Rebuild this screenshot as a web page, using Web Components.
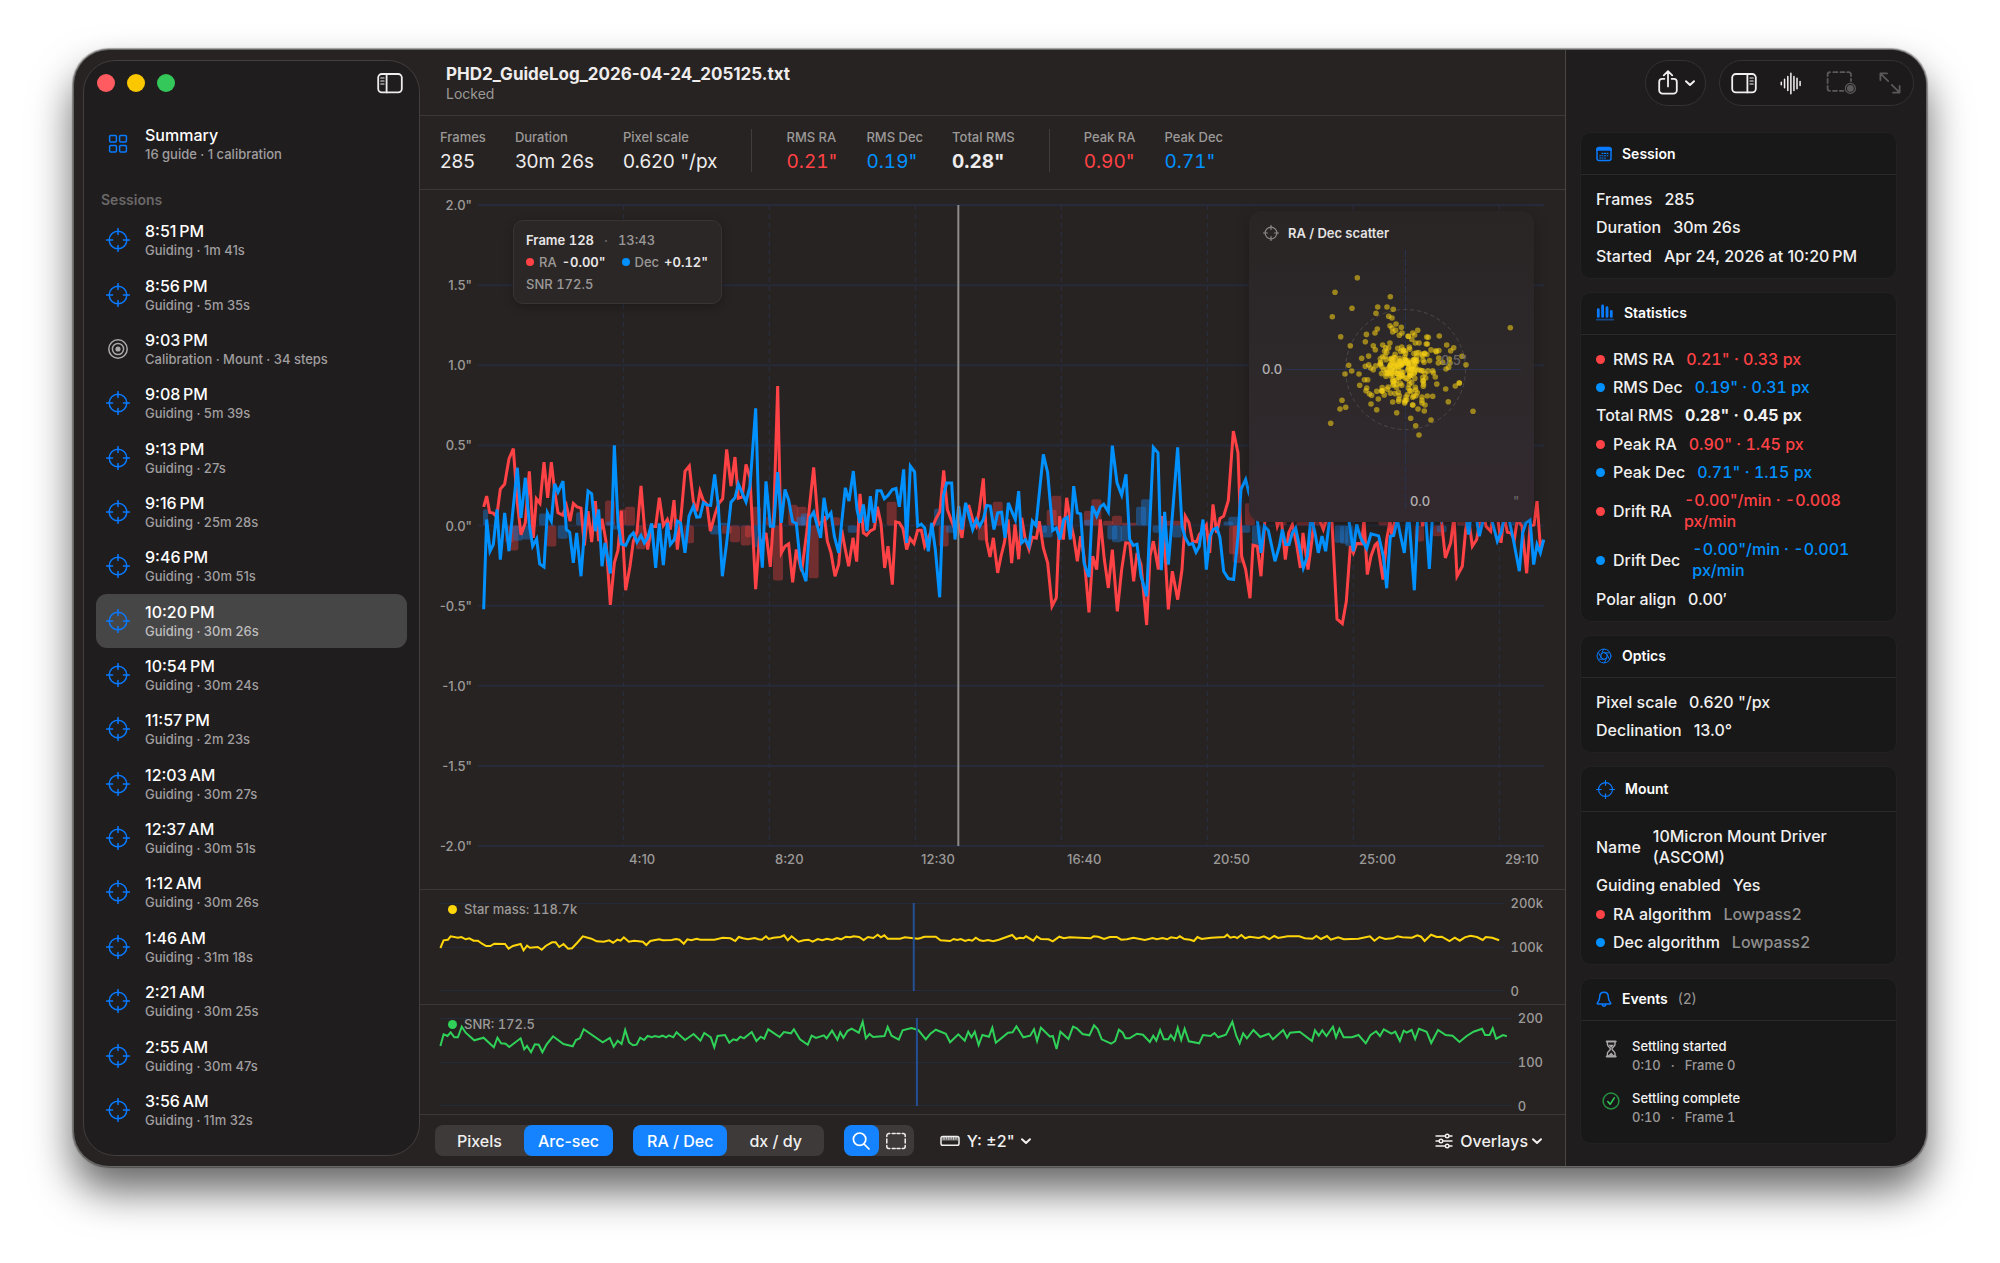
<!DOCTYPE html>
<html lang="en">
<head>
<meta charset="utf-8">
<title>PHD2_GuideLog_2026-04-24_205125.txt</title>
<style>
  html, body {
    margin: 0;
    background: #fff;
  }
  body {
    --ra: #ff4245;
    --dec: #0091ff;
    --accent: #0a7aff;
    --muted: #9b9998;
    --line: #3b3837;
    --grid: #262a3a;
    box-sizing: border-box;
    min-height: 100vh;
    padding: 49px 73px 96px;
    display: flex;
    font-family: Inter, "Liberation Sans", sans-serif;
    font-size: 16px;
    line-height: 20px;
    color: #eeecec;
    -webkit-font-smoothing: antialiased;
  }
</style>
</head>
<body>
<app-window></app-window>

<script>
const ICONS = {
  scope: [24, `<circle cx="12" cy="12" r="8.8"/><path d="M12 .6v6M12 17.4v6M.6 12h6M17.4 12h6"/>`],
  target: [24, `<circle cx="12" cy="12" r="9.2"/><circle cx="12" cy="12" r="5.6"/><circle cx="12" cy="12" r="2.6" fill="currentColor" stroke="none"/>`],
  grid: [24, `<rect x="3.6" y="3.6" width="6.8" height="6.4" rx="1"/><rect x="13.6" y="3.6" width="6.8" height="6.4" rx="1"/><rect x="3.6" y="13.6" width="6.8" height="6.4" rx="1"/><rect x="13.6" y="13.6" width="6.8" height="6.4" rx="1"/>`],
  sidebar: [26, `<rect x="1.2" y="4" width="23.6" height="18.4" rx="3.6"/><path d="M9.6 4v18.4"/><path d="M3.8 8h3.2M3.8 11h3.2M3.8 14h3.2" stroke-width="1.2"/>`],
  inspector: [26, `<rect x="1.2" y="4" width="23.6" height="18.4" rx="3.6"/><path d="M16.4 4v18.4"/><path d="M19 8h3.2M19 11h3.2M19 14h3.2" stroke-width="1.2"/>`],
  share: [26, `<path d="M9.4 8.8H7.2a3 3 0 0 0-3 3v8.4a3.4 3.4 0 0 0 3.4 3.4h10.8a3.4 3.4 0 0 0 3.4-3.4v-8.4a3 3 0 0 0-3-3h-2.2M13 16.4V1.6M8.8 5.4 13 1.2l4.2 4.2"/>`],
  chevron: [12, `<path d="M2 4.2 6 8l4-3.8" stroke-width="2"/>`],
  wave: [24, `<path d="M2.4 10.6v2.8M5.8 7.6v8.8M9.2 4.6v14.8M12.4 1.4v21.2M15.6 4.6v14.8M18.8 6.6v10.8M22 10v4"/>`],
  record: [32, `<path d="M3.6 9V7.6A2.4 2.4 0 0 1 6 5.2M9.4 5.2h4M16.4 5.2h4M23.2 5.2h1.4A2.4 2.4 0 0 1 27 7.6V9M27 12v2M3.6 12v4M3.6 19v2.4A2.4 2.4 0 0 0 6 23.8M9 23.8h4M15.8 23.8h3.6"/><circle cx="26.4" cy="21.4" r="5" stroke-width="1.2"/><circle cx="26.4" cy="21.4" r="3.4" fill="currentColor" stroke="none"/>`],
  expand: [24, `<path d="M2.4 9V2.4H9M2.8 2.8l7.4 7.4M21.6 15v6.6H15M21.2 21.2l-7.4-7.4"/>`],
  calendar: [16, `<rect x="1" y="1.5" width="14" height="13" rx="2"/><path d="M1.6 3.2h12.8" stroke-width="3"/><path d="M6 7.4h1M8.5 7.4h1M11 7.4h1M3.7 9.8h1M6 9.8h1M8.5 9.8h1M11 9.8h1M3.7 12h1M6 12h1M8.5 12h1" stroke-width="1.1"/>`],
  bars: [18, `<path d="M2.3 5.6v6.8M6.6 1.9v10.5M11 3.7v8.7M15.3 7.3v5.1" stroke-width="2.8"/><path d="M.5 15.6h17" stroke-width="1.6" opacity=".5"/>`],
  aperture: [18, `<circle cx="9" cy="9" r="7.8"/><path d="m9 5.2 3.3 1.9v3.8L9 12.8l-3.3-1.9V7.1zM9 5.2l6 .4M12.3 7.1l2.9 5.6M12.3 10.9l-3 5.6M9 12.8l-6-.4M5.7 10.9 2.8 5.3M5.7 7.1l3-5.6"/>`],
  bell: [16, `<path d="M8 1.2c-2.7 0-4.3 2-4.3 4.6 0 3.6-1.4 5-2.3 6.1-.4.5-.1 1 .5 1h12.200c.6 0 .9-.5.5-1-.9-1.100-2.300-2.500-2.300-6.100 0-2.600-1.600-4.600-4.300-4.600zM6 13.200c.2 1.300 1 2 2 2s1.800-.7 2-2"/>`],
  hourglass: [18, `<path d="M4.8 1.5h8.8M4.8 16.5h8.8" stroke-width="2.2"/><path d="M5.4 2v2.5c0 2 3 2.900 3 4.500s-3 2.500-3 4.500V16H13v-2.500c0-2-3-2.900-3-4.500s3-2.500 3-4.500V2" stroke-width="1.4"/><path d="M6.4 4.8H12L9.200 8zM6.400 15.500l2.800-3 2.800 3z" fill="currentColor" stroke="none"/>`],
  check: [18, `<circle cx="9" cy="9" r="7.9" opacity=".65"/><path d="m5.8 9.6 2.3 2.7 4.2-6.4"/>`],
  search: [22, `<circle cx="9.6" cy="9.2" r="6.2"/><path d="m14 14 5 5"/>`],
  marquee: [22, `<path d="M1.8 6.4V5.6a2 2 0 0 1 2-2h1M7.2 3.6h3M12 3.6h3M17.2 3.6h1a2 2 0 0 1 2 2v.8M20.2 9v4M20.2 15.6v.8a2 2 0 0 1-2 2h-1M15 18.4h-3M10.2 18.4h-3M4.8 18.4h-1a2 2 0 0 1-2-2v-.8M1.8 13V9"/>`],
  ruler: [20, `<rect x="1" y="5.6" width="18" height="8.6" rx="1.8"/><path d="M2 7.8h16" stroke-width="3.6" stroke-linecap="butt" opacity=".4"/><path d="M4 6v2.6M6.4 6v2M8.8 6v2.6M11.2 6v2M13.6 6v2.6M16 6v2" stroke-width="1" opacity=".7"/>`],
  sliders: [18, `<path d="M1 4h9M14.4 4H17M1 9h2.8M8.2 9H17M1 14h9M14.4 14H17"/><circle cx="12.2" cy="4" r="1.8"/><circle cx="6" cy="9" r="1.8"/><circle cx="12.2" cy="14" r="1.8"/>`]
};

class Base extends HTMLElement {
  constructor() {
    super();
    this.attachShadow({ mode: "open" });
  }
  connectedCallback() {
    this.shadowRoot.innerHTML = this.render();
  }
  attr(name) {
    return this.getAttribute(name) || "";
  }
}

class UiIcon extends Base {
  render() {
    const [box, shapes] = ICONS[this.attr("name")];
    const size = this.attr("size") || box;
    return `
      <style>
        :host { display: inline-flex; flex: none; }
        svg {
          display: block;
          fill: none;
          stroke: currentColor;
          stroke-width: ${this.attr("weight") || 1.5};
          stroke-linecap: round;
          stroke-linejoin: round;
        }
      </style>
      <svg width="${size}" height="${size}" viewBox="0 0 ${box} ${box}" aria-hidden="true">${shapes}</svg>`;
  }
}
customElements.define("ui-icon", UiIcon);

class SessionRow extends Base {
  render() {
    const icon = this.attr("icon") || "scope";
    return `
      <style>
        :host { display: flex; min-height: 54px; }
        button {
          flex: 1;
          display: flex;
          align-items: center;
          gap: 15px;
          padding: 0 10px;
          border: 0;
          border-radius: 11px;
          background: none;
          font: inherit;
          color: #fff;
          text-align: left;
        }
        :host([selected]) button { background: #474647; }
        ui-icon { color: var(--accent); }
        ui-icon[name="target"] { color: #aaa8a8; }
        strong, small { display: block; }
        strong { font-weight: 500; line-height: 20px; }
        small { font-size: 13px; font-weight: 500; line-height: 18px; color: #a09e9e; }
        :host([selected]) small { color: #bebdbd; }
      </style>
      <button type="button" ${this.hasAttribute("selected") ? 'aria-current="true"' : ""}>
        <ui-icon name="${icon}" size="24"></ui-icon>
        <span><strong><slot></slot></strong><small>${this.attr("detail")}</small></span>
      </button>`;
  }
}
customElements.define("session-row", SessionRow);

const SESSIONS = [
  ["8:51 PM", "Guiding · 1m 41s"],
  ["8:56 PM", "Guiding · 5m 35s"],
  ["9:03 PM", "Calibration · Mount · 34 steps", "target"],
  ["9:08 PM", "Guiding · 5m 39s"],
  ["9:13 PM", "Guiding · 27s"],
  ["9:16 PM", "Guiding · 25m 28s"],
  ["9:46 PM", "Guiding · 30m 51s"],
  ["10:20 PM", "Guiding · 30m 26s"],
  ["10:54 PM", "Guiding · 30m 24s"],
  ["11:57 PM", "Guiding · 2m 23s"],
  ["12:03 AM", "Guiding · 30m 27s"],
  ["12:37 AM", "Guiding · 30m 51s"],
  ["1:12 AM", "Guiding · 30m 26s"],
  ["1:46 AM", "Guiding · 31m 18s"],
  ["2:21 AM", "Guiding · 30m 25s"],
  ["2:55 AM", "Guiding · 30m 47s"],
  ["3:56 AM", "Guiding · 11m 32s"]
];
const SELECTED = "10:20 PM";

class SideBar extends Base {
  render() {
    const rows = SESSIONS.map(([time, detail, icon]) => `
      <session-row detail="${detail}" icon="${icon || "scope"}" ${time === SELECTED ? "selected" : ""}>${time.replace(" ", "\u202f")}</session-row>`).join("");
    return `
      <style>
        :host {
          display: flex;
          flex-direction: column;
          box-sizing: border-box;
          width: 337px;
          flex: none;
          margin: 10px 0 10px 9px;
          padding: 0 12px 18px;
          border: 1px solid #433d3c;
          border-radius: 32px;
          background: #1f1d1e;
        }
        header {
          display: flex;
          align-items: center;
          gap: 12px;
          height: 44px;
          margin: 0 4px 12px 1px;
        }
        i { width: 18px; height: 18px; border-radius: 50%; }
        .close { background: #ff5b60; }
        .min { background: #fbc800; }
        .max { background: #34c759; }
        button {
          display: flex;
          margin-left: auto;
          padding: 0;
          border: 0;
          background: none;
          color: #eeecec;
        }
        h2 {
          margin: 19px 0 3px 5px;
          font-size: 14px;
          font-weight: 600;
          line-height: 20px;
          color: #6a6868;
        }
        nav { flex: 1; display: flex; flex-direction: column; }
        nav session-row { flex: 1; }
      </style>
      <header>
        <i class="close"></i><i class="min"></i><i class="max"></i>
        <button type="button" aria-label="Toggle sidebar"><ui-icon name="sidebar" weight="1.8"></ui-icon></button>
      </header>
      <session-row icon="grid" detail="16 guide · 1 calibration">Summary</session-row>
      <h2>Sessions</h2>
      <nav>${rows}</nav>`;
  }
}
customElements.define("side-bar", SideBar);

class StatItem extends Base {
  render() {
    return `
      <style>
        :host { display: block; }
        span, b { display: block; white-space: nowrap; }
        span { font-size: 13px; font-weight: 500; line-height: 20px; color: var(--muted); }
        b { margin-top: 2px; font-size: 19px; line-height: 25px; font-weight: 400; color: #eeecec; }
        :host([tone]) b { font-variant-numeric: tabular-nums; }
        :host([tone="ra"]) b { color: var(--ra); }
        :host([tone="dec"]) b { color: var(--dec); }
        :host([strong]) b { font-weight: 700; }
      </style>
      <span>${this.attr("label")}</span><b><slot></slot></b>`;
  }
}
customElements.define("stat-item", StatItem);

// Each run of samples is [x offset, x scale, "x,y x,y ..."].
function trace(runs, top, yScale) {
  return runs.map(([at, scale, text]) => text.trim().split(/\s+/).map(p => {
    const [x, y] = p.split(",").map(Number);
    return (at + x * scale).toFixed(1) + "," + ((y - top) * yScale).toFixed(1);
  }).join(" ")).join(" ");
}

const RA = [
  [-24, 1, "41,412 50,380 59,429 70,431 80,442 91,359 104,344 117,268 130,238 142,400 153,496 166,460 178,306 190,505 199,388 210,402 222,278 233,385 244,278 254,365 264,430 278,437 289,408 300,455 310,402 321,412 333,416 343,528 354,425 365,518 376,395 386,515 396,448 408,515 421,706 433,580 444,542 454,424 467,662 480,590 490,515 501,487 513,349 523,470 533,540 545,471 557,471 568,385 580,468 592,450 601,480 612,392 622,540 634,430 645,306 658,290 670,395 680,425 690,365 700,393 711,405 721,485 735,435 746,402 758,388 770,240 783,350 795,263 805,386 817,382 828,285 840,325 857,659 868,508 877,520 888,490 901,592 912,420 923,50 934,550 945,530 956,523 968,638 979,540 995,605 1010,490 1031,294 1045,467 1057,455 1063,440 1072,515 1083,550 1095,620 1106,585 1115,480 1124,530 1136,590 1149,505 1160,576"],
  [1146, 1, "0,373 10,490 20,497 31,484 43,478 52,412 63,462 74,595 84,530 97,645 107,457 118,460 129,478 140,540 150,507 162,522 173,482 184,482 194,530 205,505 215,480 226,452 240,425 251,303 262,420 273,450 284,478 295,462 306,505 316,412 327,410 338,450 349,470 358,420 370,327 380,515 390,562 400,505 413,610 423,560 433,520 444,450 455,581 465,465 476,569 485,445 495,505 507,540 517,503 529,506 538,455 550,535 563,580 576,710 589,685 599,440 610,510 620,385 630,450 641,500 652,575 662,500 672,560 687,728 698,560 710,600 721,450 733,570 745,655 757,540 772,725 785,600 797,520 809,521 821,635 831,550 843,585 860,766 870,560 880,515 895,600 905,440 914,530 925,719 937,605 953,690 966,600 976,440 987,460 998,515 1010,517 1018,495 1028,485 1039,467 1049,550 1059,405 1070,490 1080,447 1091,440 1105,393 1120,185 1134,250 1145,560 1157,600 1170,686 1179,527"],
  [2166, 1, "172,530 183,620 195,450 208,420 220,400 232,470 243,440 256,570 266,490 277,465 289,520 301,595 309,490 324,600 336,510 347,400 358,450 370,480 382,440 395,440 411,748 427,762 439,695 451,530 460,550 470,522 485,523 492,450 502,615 513,560 525,527 532,520 549,630 560,510 570,455 575,495 590,430 600,400 612,440 625,400 640,420 655,380 668,470 680,400 695,380 710,420 722,430 736,565 752,520 762,440 771,620 787,590 797,480 805,440 817,530 830,510 840,450 850,430 858,470 872,485 885,400 895,460 903,520 912,440 922,488 932,490 943,510 952,450 966,470 980,611 990,470 1002,466 1011,395 1021,530 1031,512"]
];
const DEC = [
  [-24, 1, "41,719 50,450 60,545 70,525 81,420 91,570 104,430 117,545 128,430 142,295 153,445 166,325 178,465 188,530 200,508 209,583 222,592 232,430 244,455 254,343 264,368 279,335 289,480 299,488 310,580 320,490 333,620 343,490 354,365 365,373 376,485 386,420 396,590 405,520 421,612 433,228 444,460 454,524 467,528 480,500 490,490 501,518 513,498 523,520 533,505 545,462 557,595 568,462 580,587 592,460 601,525 613,510 622,455 632,461 645,550 657,440 670,410 680,443 690,442 700,400 711,407 722,408 734,315 745,410 757,620 770,520 783,398 795,385 805,343 817,372 828,397 840,350 857,117 868,480 877,594 888,336 901,470 911,470 923,308 934,460 945,360 956,392 968,457 979,462 992,590 1008,635 1020,445 1031,428 1042,470 1052,505 1062,385 1072,445 1083,430 1093,500 1106,550 1115,460 1126,355 1137,395 1150,305 1161,420"],
  [1146, 1, "0,460 10,405 21,485 31,380 42,460 51,364 63,364 73,388 84,378 97,360 108,357 118,412 131,300 140,520 151,290 164,308 173,470 184,464 194,475 205,545 215,460 226,540 239,683 250,380 260,341 275,341 285,510 296,410 306,480 317,400 327,440 338,480 349,450 359,470 370,450 380,408 391,410 402,480 413,430 425,428 435,505 445,400 455,425 466,450 476,365 485,520 496,510 507,530 517,455 528,468 538,370 550,255 563,310 578,483 589,475 600,510 611,450 622,443 631,510 641,350 652,430 662,433 672,580 687,622 697,410 710,440 721,412 731,404 745,427 757,229 771,340 785,377 798,315 809,510 820,528 831,524 843,620 860,680 870,450 880,234 894,250 904,602 914,427 925,585 937,440 953,234 966,470 976,505 987,525 998,522 1008,548 1018,530 1029,450 1039,600 1050,500 1060,480 1071,475 1080,505 1091,605 1105,627 1121,630 1134,500 1143,360 1157,330"],
  [2166, 1, "147,372 160,400 172,450 183,550 193,470 205,483 225,575 238,530 247,480 257,525 267,525 277,490 287,475 298,530 310,595 322,560 333,440 345,490 355,550 366,500 377,545 390,440 400,420 415,440 430,400 445,440 460,545 470,465 482,505 500,537 513,493 536,499 550,560 560,656 571,500 581,498 592,450 602,500 613,550 625,420 643,662 655,400 668,450 677,440 688,598 698,430 710,400 725,450 740,400 755,430 770,400 785,440 795,420 806,495 817,400 828,440 838,500 850,450 862,430 875,450 892,515 903,490 914,440 925,440 940,510 958,605 968,490 978,460 990,450 1001,585 1011,525 1021,550 1031,510"]
];

// Guide pulses: x, width, height (negative is below the axis).
const RA_PULSES = [
  [81,26,-50],[93,28,-75],[205,30,-63],[381,30,75],[423,20,49],[441,30,56],[474,28,-71],[618,30,-53],[731,30,-25],[756,30,-50],[788,30,-60],[801,20,-35],[821,28,56],[864,16,27],[885,30,-165],[931,28,62],[956,30,56],[992,30,-158],[1058,28,25],
  [1226,30,71],[1382,30,-63],[1500,24,-45],[1544,30,71],[1706,30,47],[1720,30,89],[1818,22,44],[1840,30,79],[1875,30,14],[1902,30,29],[1931,46,8],[2051,58,14],[2253,30,-86],[2264,30,-112],[2301,30,67],
  [2396,30,27],[2456,50,27],[2510,40,27],[2701,30,17],[2810,28,-48],[2864,28,-32],[2936,30,27]
];
const DEC_PULSES = [
  [15,15,49],[106,28,-46],[131,30,-42],[183,24,36],[239,30,-40],[294,20,40],[384,26,12],[401,28,-12],[696,28,-27],[721,28,8],[821,28,-65],[956,26,26],[968,28,36],[1109,28,-22],
  [1368,20,50],[1404,26,-22],[1681,26,-22],[1694,30,-36],[1818,24,17],[1888,30,-42],[1902,30,-50],[1928,22,-47],[1974,30,56],[1989,28,79],[2024,30,-22],[2083,28,-36],[2236,30,12],[2251,30,26],[2289,28,-22],[2322,28,-57],
  [2570,28,-52],[2586,24,-55],[2602,24,-62],[2876,30,-20],[3100,40,20]
];

const pulses = (list, cls) => list.map(([x, w, h]) =>
  `<rect class="${cls}" x="${x}" y="${h > 0 ? 960 - h : 960}" width="${w}" height="${Math.abs(h)}" rx="6"/>`).join("");

class FrameTip extends Base {
  render() {
    return `
      <style>
        :host {
          display: block;
          padding: 12px 13px 4px 12px;
          border: 1px solid #373433;
          border-radius: 10px;
          background: #2b2727;
          box-shadow: 0 3px 10px rgba(0, 0, 0, .25);
          font-size: 13px;
          font-weight: 500;
          font-variant-numeric: tabular-nums;
          line-height: 22px;
          color: var(--muted);
          white-space: nowrap;
        }
        p { margin: 0; margin-top: -4px; padding-bottom: 4px; display: flex; align-items: center; }
        b { font-weight: 600; color: #e8e6e6; }
        i { width: 8px; height: 8px; margin-right: 5px; border-radius: 50%; background: var(--ra); }
        .dec { background: var(--dec); }
        b.val { margin: 0 16px 0 5px; }
        b.last { margin-right: 0; }
        .sep { margin: 0 10px; color: #6f6d6c; }
      </style>
      <p><b>Frame 128</b><span class="sep">·</span><span>13:43</span></p>
      <p><i></i>RA <b class="val">-0.00"</b><i class="dec"></i>Dec <b class="val last">+0.12"</b></p>
      <p>SNR 172.5</p>`;
  }
}
customElements.define("frame-tip", FrameTip);

const OUTER = [
  [412,264],[345,308],[337,381],[396,356],[511,321],[473,352],[501,352],[520,359],[468,371],[506,380],[516,385],[871,414],[362,441],[391,468],[436,456],[759,665],[332,701],[360,658],[377,653],[366,632],[597,736],[587,708],[633,691],[572,686],[530,669],[470,660],[453,643],[475,628],[685,636],[706,589],[718,580],[718,580],[677,598],[738,525],[726,500],[701,474],[680,466],[692,483],[658,439],[625,443],[620,442],[593,422],[619,463],[622,463],[649,486],[386,527],[395,544],[375,553],[425,506],[419,587],[443,570],[440,595],[438,603],[448,612],[470,605],[638,620],[606,622],[606,632],[606,640],[615,646],[594,658],[613,664],[578,646],[578,646],[578,623],[518,637],[536,635],[555,636],[558,622],[560,630],[555,632],[472,418],[465,430],[528,403],[544,413],[510,408],[516,415],[518,427],[527,422],[546,430],[538,437],[646,562],[640,549],[638,543],[678,538],[686,533],[690,520],[688,508],[655,520],[668,518],[460,468],[466,480],[488,466],[497,474],[565,440],[565,440],[584,436],[586,460],[578,430],[597,460],[617,565],[610,590],[436,530],[446,525],[452,535],[460,540]
];

class ScatterPanel extends Base {
  points() {
    const pts = OUTER.slice();
    let seed = 11;
    const rand = () => (seed = (seed * 16807) % 2147483647) / 2147483647;
    const bell = () => (rand() + rand() + rand() - 1.5) * 2;
    for (let i = 0; i < 185; i++) {
      pts.push([547 + bell() * 45, 540 + bell() * 40]);
    }
    return pts.map(([x, y]) =>
      `<circle cx="${((x - 87) / 3).toFixed(1)}" cy="${((y - 64) / 3).toFixed(1)}" r="2.8"/>`).join("");
  }
  render() {
    return `
      <style>
        :host {
          display: block;
          width: 285px;
          border-radius: 13px;
          background: linear-gradient(#292525, #2d282a 50%, #32292f);
          box-shadow: 0 4px 14px rgba(0, 0, 0, .25);
        }
        svg { display: block; width: 100%; }
        h3 {
          position: absolute;
          top: 12px;
          left: 14px;
          margin: 0;
          display: flex;
          align-items: center;
          gap: 9px;
          font-size: 13px;
          line-height: 20px;
          font-weight: 600;
          color: #e4e2e2;
        }
        ui-icon { color: #8b8888; }
        .axis { stroke: #28334f; stroke-width: 1; }
        .ring { fill: none; stroke: #4c4748; stroke-width: 1; stroke-dasharray: 4 3; }
        .dots { fill: #f5cf13; fill-opacity: .56; }
        text { font-size: 13px; font-weight: 500; fill: #b3b0b1; }
        .faint { fill: #7b7677; fill-opacity: .8; }
      </style>
      <svg viewBox="0 0 285 311" role="img" aria-label="RA / Dec scatter">
        <path class="axis" d="M36 158.5h236"/>
        <path class="axis" d="M156.5 39v259" stroke-dasharray="7 2"/>
        <circle class="ring" cx="156.5" cy="158.5" r="60"/>
        <g class="dots">${this.points()}</g>
        <text x="13" y="163">0.0</text>
        <text x="161" y="295">0.0</text>
        <text class="faint" x="192" y="154">0.5"</text>
        <text class="faint" x="264" y="295">"</text>
      </svg>
      <h3><ui-icon name="scope" size="16" weight="1.8"></ui-icon>RA / Dec scatter</h3>`;
  }
}
customElements.define("scatter-panel", ScatterPanel);

class GuideChart extends Base {
  render() {
    const rows = [0, 240, 480, 720, 960, 1200, 1440, 1680, 1920];
    const cols = [436, 874, 1312, 1750, 2188, 2626, 3064];
    return `
      <style>
        :host {
          display: grid;
          grid-template: 1fr auto / 58px 1fr 21px;
          padding-top: 15px;
          min-height: 400px;
          font-size: 13px;
          font-weight: 500;
          line-height: 16px;
          color: #9c9a99;
        }
        .y {
          display: flex;
          flex-direction: column;
          justify-content: space-between;
          margin: -8px 6px -8px 0;
          text-align: right;
        }
        .plot { position: relative; min-height: 0; }
        svg.lines { position: absolute; inset: 0; width: 100%; height: 100%; overflow: visible; }
        .lines * { vector-effect: non-scaling-stroke; }
        .h { stroke: var(--grid); stroke-width: 2; }
        .v { stroke: #2b2f41; stroke-width: 1; stroke-dasharray: 5 4; }
        .ra, .dec { fill: none; stroke: var(--ra); stroke-width: 3; }
        .dec { stroke: var(--dec); }
        .pra { fill: var(--ra); opacity: .34; }
        .pdec { fill: #1d7fe0; opacity: .42; }
        .cursor { stroke: #8c8b8a; stroke-width: 2; }
        .x {
          grid-column: 2;
          display: grid;
          grid-template-columns: 145fr repeat(6, 146fr) 45fr;
          padding: 5px 0 22px;
        }
        .x span { padding-left: 6px; white-space: nowrap; }
        .x span:first-child { grid-column: 2; }
        frame-tip { position: absolute; left: 35px; top: 15px; }
        scatter-panel { position: absolute; right: 10px; top: 6px; }
      </style>
      <div class="y">${["2.0", "1.5", "1.0", "0.5", "0.0", "-0.5", "-1.0", "-1.5", "-2.0"].map(v => `<span>${v}"</span>`).join("")}</div>
      <div class="plot">
        <svg class="lines" viewBox="0 0 3198 1920" preserveAspectRatio="none" role="img" aria-label="RA and Dec guiding error">
          ${rows.map(y => `<path class="h" d="M0 ${y}H3198"/>`).join("")}
          ${cols.map(x => `<path class="v" d="M${x} 0V1920"/>`).join("")}
          ${pulses(RA_PULSES, "pra")}${pulses(DEC_PULSES, "pdec")}
          <polyline class="ra" points="${trace(RA, -492, 1)}"/>
          <polyline class="dec" points="${trace(DEC, -492, 1)}"/>
          <path class="cursor" d="M1441 0V1920"/>
        </svg>
        <frame-tip></frame-tip>
        <scatter-panel></scatter-panel>
      </div>
      <div class="x">${["4:10", "8:20", "12:30", "16:40", "20:50", "25:00", "29:10"].map(t => `<span>${t}</span>`).join("")}</div>`;
  }
}
customElements.define("guide-chart", GuideChart);

const MASS = [
  [-20, 1 / 2.8, "57,203 66,180 78,178 86,168 106,172 116,170 128,177 138,174 150,181 162,181 174,190 185,197 197,197 208,190 238,191 248,205 260,197 282,191 290,210 300,196 308,202 330,200 341,208 352,197 370,186 380,186 390,200 402,191 415,205 426,204 440,188 456,168 480,175 495,183 515,184 530,180 541,187 553,178 562,181 571,171 585,184 600,181 624,184 634,194 645,182 670,177 680,180 705,179 717,176 727,178 739,190 749,177 760,180 775,175 785,178 825,178 848,172 870,174 883,182 893,170 905,174 918,177 938,173 948,177 958,178 969,168 977,176 990,172 1010,170 1020,165 1030,180 1041,168 1060,184 1075,180 1088,178 1100,184 1114,176 1127,180 1140,175 1155,179 1168,173 1180,177 1193,169 1205,171 1215,168 1230,170 1243,179 1255,170 1270,173 1282,163 1291,171 1301,165 1310,175 1345,175 1358,171 1395,175 1403,173 1413,169 1445,169 1458,180 1485,182 1495,176 1505,179 1515,176 1527,182 1537,178 1547,181 1557,172"],
  [540, 1 / 2.613, "0,180 10,182 22,179 35,183 50,178 85,164 95,176 105,172 115,174 121,168 140,181 149,168 160,176 180,177 191,183 208,169 220,174 235,171 290,174 298,168 310,169 325,176 340,170 358,170 370,178 385,177 402,172 432,179 452,173 463,177 478,173 490,177 500,171 515,174 523,168 535,176 550,178 560,182 569,170 580,176 605,172 640,170 647,163 655,172 665,169 673,173 684,164 694,174 705,169 730,173 743,168 757,176 770,167 780,173 805,168 835,168 850,174 870,175 880,167 892,176 908,167 918,178 937,171 952,177 990,175 1020,168 1032,181 1045,170 1060,176 1080,174 1092,168 1105,171 1130,172 1144,165 1154,169 1163,182 1180,163 1195,170 1208,169 1228,182 1242,172 1255,181 1268,171 1283,166 1300,170 1315,179 1323,170 1340,172 1358,180"]
];
const SNR = [
  [-20, 1 / 2.8, "57,498 66,463 77,468 86,457 96,472 106,472 117,440 128,458 152,481 178,473 207,502 217,473 227,490 240,491 250,501 282,475 292,508 300,498 311,517 322,493 333,494 343,517 355,493 373,469 402,492 428,499 437,480 448,475 459,448 512,487 532,474 543,500 554,482 565,492 575,450 586,487 597,496 607,494 617,473 628,480 638,468 650,472 658,468 670,471 680,467 690,472 698,466 710,472 719,457 743,480 767,462 786,482 797,459 815,472 825,502 834,468 855,465 867,488 878,478 888,481 898,470 908,475 930,456 943,483 955,470 965,476 976,448 1008,471 1020,456 1040,460 1048,448 1065,478 1087,494 1098,467 1110,474 1132,466 1140,475 1155,452 1170,479 1178,457 1187,473 1198,453 1210,446 1230,458 1241,425 1250,475 1260,462 1270,471 1302,468 1311,441 1322,467 1342,479 1353,451 1378,444 1397,450 1418,478 1430,462 1446,449 1474,461 1486,487 1509,463 1527,482 1537,455 1546,472 1555,455 1566,495"],
  [540, 1 / 2.613, "3,480 8,465 25,470 34,443 43,488 75,458 87,457 97,439 115,472 133,467 143,448 151,483 161,443 185,470 192,468 202,507 212,455 233,477 245,440 255,445 270,462 288,466 300,436 310,448 320,478 345,491 355,483 365,449 375,458 382,475 393,475 412,461 428,464 446,486 455,467 463,482 473,450 483,478 494,478 501,465 510,480 519,443 528,480 537,446 548,484 575,490 585,465 605,468 615,459 625,472 645,464 662,425 672,467 681,490 690,460 700,475 717,450 735,471 757,461 768,478 795,450 805,473 813,458 838,455 870,483 878,451 888,467 897,451 908,468 925,440 933,472 942,446 953,472 975,472 992,465 1011,490 1023,466 1038,454 1048,468 1058,448 1078,461 1088,455 1100,483 1110,452 1118,458 1131,450 1140,477 1150,446 1170,455 1182,489 1200,450 1220,465 1238,467 1256,486 1275,468 1293,455 1315,446 1323,465 1335,465 1343,445 1352,476 1370,465 1380,469"]
];
const STRIPS = {
  mass: { width: 1065, cursor: 474, color: "#ffd60a", label: "Star mass: 118.7k", ticks: ["200k", "100k", "0"], points: trace(MASS, 68, 1 / 3) },
  snr: { width: 1073, cursor: 477.5, color: "#30d158", label: "SNR: 172.5", ticks: ["200", "100", "0"], points: trace(SNR, 414, 1 / 3) }
};

class StripChart extends Base {
  render() {
    const s = STRIPS[this.attr("kind")];
    return `
      <style>
        :host {
          display: flex;
          gap: 6px;
          padding: 13px 22px 13px 20px;
          border-top: 1px solid var(--line);
          font-size: 13px;
          font-weight: 500;
          font-variant-numeric: tabular-nums;
          line-height: 16px;
          color: #9c9a99;
        }
        :host([kind="snr"]) { padding-bottom: 8px; }
        .plot { position: relative; flex: 1; height: 88px; }
        svg { display: block; width: 100%; height: 100%; overflow: visible; }
        svg * { vector-effect: non-scaling-stroke; }
        .h { stroke: #242c3b; stroke-width: 1; }
        .cursor { stroke: #234f94; stroke-width: 2; }
        polyline { fill: none; stroke: ${s.color}; stroke-width: 2; }
        .legend { position: absolute; left: 8px; top: -2px; display: flex; align-items: center; gap: 7px; }
        .legend i { width: 9px; height: 9px; border-radius: 50%; background: ${s.color}; }
        .ticks { display: flex; flex-direction: column; justify-content: space-between; margin: -8px 0; }
      </style>
      <div class="plot">
        <span class="legend"><i></i>${s.label}</span>
        <svg viewBox="0 0 ${s.width} 88" preserveAspectRatio="none" role="img" aria-label="${s.label}">
          <path class="h" d="M0 .5H${s.width}M0 44.5H${s.width}M0 87.5H${s.width}"/>
          <polyline points="${s.points}"/>
          <path class="cursor" d="M${s.cursor} 0V88"/>
        </svg>
      </div>
      <div class="ticks">${s.ticks.map(t => `<span>${t}</span>`).join("")}</div>`;
  }
}
customElements.define("strip-chart", StripChart);

class SegmentedControl extends Base {
  render() {
    return `
      <style>
        :host {
          display: flex;
          height: 31px;
          border-radius: 8px;
          background: #3d3a39;
        }
        ::slotted(button) {
          padding: 0 14px;
          border: 0;
          border-radius: 8px;
          background: none;
          font: inherit;
          font-weight: 500;
          color: #f1efef;
        }
        ::slotted(button[aria-pressed="true"]) { background: #1583ff; color: #fff; }
        :host([wide]) ::slotted(button[aria-pressed="false"]) { padding: 0 22px; }
        :host([icons]) ::slotted(button) { display: flex; align-items: center; padding: 0 6px; width: 35px; justify-content: center; }
      </style>
      <slot></slot>`;
  }
}
customElements.define("segmented-control", SegmentedControl);

class ChartToolbar extends Base {
  render() {
    return `
      <style>
        :host {
          display: flex;
          align-items: center;
          gap: 20px;
          height: 51px;
          padding: 0 22px 0 15px;
          border-top: 1px solid var(--line);
          font-weight: 500;
        }
        label, .menu {
          display: flex;
          align-items: center;
          gap: 7px;
          color: #f1efef;
        }
        label { margin-left: 6px; }
        select {
          appearance: none;
          padding: 0;
          margin-right: -3px;
          border: 0;
          background: none;
          font: inherit;
          color: inherit;
        }
        .menu { margin-left: auto; padding: 0; border: 0; background: none; font: inherit; }
        .menu ui-icon:last-child { margin-left: -4px; }
      </style>
      <segmented-control wide>
        <button type="button" aria-pressed="false">Pixels</button>
        <button type="button" aria-pressed="true">Arc-sec</button>
      </segmented-control>
      <segmented-control wide>
        <button type="button" aria-pressed="true">RA / Dec</button>
        <button type="button" aria-pressed="false">dx / dy</button>
      </segmented-control>
      <segmented-control icons>
        <button type="button" aria-pressed="true" aria-label="Zoom"><ui-icon name="search" weight="1.7"></ui-icon></button>
        <button type="button" aria-pressed="false" aria-label="Select region"><ui-icon name="marquee"></ui-icon></button>
      </segmented-control>
      <label><ui-icon name="ruler"></ui-icon>
        <select aria-label="Y range"><option>Y: ±2"</option><option>Y: ±4"</option></select>
        <ui-icon name="chevron"></ui-icon>
      </label>
      <button class="menu" type="button" aria-haspopup="menu"><ui-icon name="sliders" weight="1.4"></ui-icon>Overlays<ui-icon name="chevron"></ui-icon></button>`;
  }
}
customElements.define("chart-toolbar", ChartToolbar);

class LogView extends Base {
  render() {
    return `
      <style>
        :host { display: flex; flex-direction: column; flex: 1; min-width: 0; }
        header { padding: 14px 26px 12px; border-bottom: 1px solid var(--line); }
        h1 { margin: 0; font-size: 17px; line-height: 21px; font-weight: 700; color: #eeecec; }
        header p { margin: 0; font-size: 14px; line-height: 18px; color: var(--muted); }
        .stats {
          display: flex;
          gap: 29px;
          padding: 11px 20px 15px;
          border-bottom: 1px solid var(--line);
        }
        hr { width: 1px; margin: 2px 5px; border: 0; background: #403d3c; }
        guide-chart { flex: 1; }
      </style>
      <header><h1>PHD2_GuideLog_2026-04-24_205125.txt</h1><p>Locked</p></header>
      <div class="stats">
        <stat-item label="Frames">285</stat-item>
        <stat-item label="Duration">30m 26s</stat-item>
        <stat-item label="Pixel scale">0.620 "/px</stat-item>
        <hr>
        <stat-item label="RMS RA" tone="ra">0.21"</stat-item>
        <stat-item label="RMS Dec" tone="dec">0.19"</stat-item>
        <stat-item label="Total RMS" tone="total" strong>0.28"</stat-item>
        <hr>
        <stat-item label="Peak RA" tone="ra">0.90"</stat-item>
        <stat-item label="Peak Dec" tone="dec">0.71"</stat-item>
      </div>
      <guide-chart></guide-chart>
      <strip-chart kind="mass"></strip-chart>
      <strip-chart kind="snr"></strip-chart>
      <chart-toolbar></chart-toolbar>`;
  }
}
customElements.define("log-view", LogView);

class InfoCard extends Base {
  render() {
    return `
      <style>
        :host {
          display: flex;
          flex-direction: column;
          border: 1px solid #232222;
          border-radius: 11px;
          background: #181818;
        }
        header {
          display: flex;
          align-items: center;
          gap: 10px;
          min-height: 41px;
          padding: 0 15px;
          border-bottom: 1px solid #2b2a2a;
        }
        :host([icon="scope"]) header { min-height: 44px; }
        ui-icon { color: var(--accent); }
        h2 { margin: 0; font-size: 14px; font-weight: 600; color: #fff; }
        header span { font-size: 14px; color: var(--muted); }
        .body {
          flex: 1;
          display: flex;
          flex-direction: column;
          justify-content: space-between;
          gap: 7px;
          padding: 14px 14px 11px 15px;
        }
        :host([count]) .body { padding: 16px 14px 9px 15px; }
      </style>
      <header>
        <ui-icon name="${this.attr("icon")}" size="${this.attr("size") || 16}" weight="${this.attr("weight")}"></ui-icon>
        <h2>${this.attr("heading")}</h2>
        ${this.attr("count") ? `<span>(${this.attr("count")})</span>` : ""}
      </header>
      <div class="body"><slot></slot></div>`;
  }
}
customElements.define("info-card", InfoCard);

class InfoRow extends Base {
  render() {
    return `
      <style>
        :host { display: flex; align-items: center; line-height: 21px; font-weight: 500; color: #f1f0f0; }
        .label { white-space: nowrap; margin-right: 12px; }
        :host([dot]) .label::before {
          content: "";
          display: inline-block;
          width: 9px;
          height: 9px;
          margin-right: 8px;
          border-radius: 50%;
          background: var(--ra);
          vertical-align: 1px;
        }
        :host([dot="dec"]) .label::before { background: var(--dec); }
        :host([tone="ra"]) .value { color: var(--ra); }
        :host([tone="dec"]) .value { color: var(--dec); }
        :host([tone="muted"]) .value { color: #8f8e8e; }
        :host([tone]) .value { font-variant-numeric: tabular-nums; }
        :host([strong]) .value { font-weight: 700; font-variant-numeric: tabular-nums; }
      </style>
      <span class="label">${this.attr("label")}</span><span class="value"><slot></slot></span>`;
  }
}
customElements.define("info-row", InfoRow);

class EventItem extends Base {
  render() {
    return `
      <style>
        :host {
          display: grid;
          grid-template-columns: 18px 1fr;
          column-gap: 12px;
          padding: 0 6px 7px;
          font-size: 13px;
          font-weight: 500;
          line-height: 19px;
          color: #f4f3f3;
        }
        ui-icon { margin-top: 3px; color: #aaa8a8; }
        ui-icon[name="check"] { color: #30d158; }
        small { display: block; font-size: 13px; font-variant-numeric: tabular-nums; color: var(--muted); }
        i { margin: 0 10px; font-style: normal; }
      </style>
      <ui-icon name="${this.attr("icon")}"></ui-icon>
      <div><slot></slot><small>${this.attr("time")}<i>·</i>Frame ${this.attr("frame")}</small></div>`;
  }
}
customElements.define("event-item", EventItem);

class InspectorPane extends Base {
  render() {
    return `
      <style>
        :host {
          display: flex;
          flex-direction: column;
          box-sizing: border-box;
          width: 361px;
          flex: none;
          padding: 10px 12px 22px 14px;
          border-left: 1px solid #4a4543;
          background: #201d1e;
        }
        .tools { display: flex; justify-content: flex-end; gap: 13px; margin-bottom: 26px; }
        .pill {
          display: flex;
          align-items: center;
          box-sizing: border-box;
          height: 46px;
          padding: 0 11px;
          border: 1px solid #363232;
          border-radius: 23px;
          background: #1c1a1a;
        }
        button { display: flex; align-items: center; padding: 0; border: 0; background: none; color: #f1efef; }
        button:disabled { color: #5b5959; }
        .share { gap: 3px; padding: 0 9px; }
        .group { gap: 22px; }
        .cards { flex: 1; display: flex; flex-direction: column; gap: 13px; margin-right: 17px; }
        .cards > :nth-child(1) { flex-grow: 3; }
        .cards > :nth-child(2) { flex-grow: 8; }
        .cards > :nth-child(3) { flex-grow: 2; }
        .cards > :nth-child(4) { flex-grow: 4; }
      </style>
      <div class="tools">
        <button class="pill share" type="button" aria-label="Share"><ui-icon name="share" weight="1.8"></ui-icon><ui-icon name="chevron"></ui-icon></button>
        <div class="pill group">
          <button type="button" aria-label="Toggle inspector"><ui-icon name="inspector" weight="1.8"></ui-icon></button>
          <button type="button" aria-label="Waveform"><ui-icon name="wave" size="23" weight="1.6"></ui-icon></button>
          <button type="button" aria-label="Capture region" disabled><ui-icon name="record" weight="1.8"></ui-icon></button>
          <button type="button" aria-label="Expand" disabled><ui-icon name="expand" weight="1.8"></ui-icon></button>
        </div>
      </div>
      <div class="cards">
        <info-card icon="calendar" heading="Session">
          <info-row label="Frames">285</info-row>
          <info-row label="Duration">30m 26s</info-row>
          <info-row label="Started">Apr 24, 2026 at 10:20\u202fPM</info-row>
        </info-card>
        <info-card icon="bars" size="18" heading="Statistics">
          <info-row label="RMS RA" dot="ra" tone="ra">0.21" · 0.33 px</info-row>
          <info-row label="RMS Dec" dot="dec" tone="dec">0.19" · 0.31 px</info-row>
          <info-row label="Total RMS" strong>0.28" · 0.45 px</info-row>
          <info-row label="Peak RA" dot="ra" tone="ra">0.90" · 1.45 px</info-row>
          <info-row label="Peak Dec" dot="dec" tone="dec">0.71" · 1.15 px</info-row>
          <info-row label="Drift RA" dot="ra" tone="ra">-0.00"/min · -0.008 px/min</info-row>
          <info-row label="Drift Dec" dot="dec" tone="dec">-0.00"/min · -0.001 px/min</info-row>
          <info-row label="Polar align">0.00′</info-row>
        </info-card>
        <info-card icon="aperture" weight="1.1" heading="Optics">
          <info-row label="Pixel scale">0.620 "/px</info-row>
          <info-row label="Declination">13.0°</info-row>
        </info-card>
        <info-card icon="scope" size="19" heading="Mount">
          <info-row label="Name">10Micron Mount Driver (ASCOM)</info-row>
          <info-row label="Guiding enabled">Yes</info-row>
          <info-row label="RA algorithm" dot="ra" tone="muted">Lowpass2</info-row>
          <info-row label="Dec algorithm" dot="dec" tone="muted">Lowpass2</info-row>
        </info-card>
        <info-card icon="bell" heading="Events" count="2">
          <event-item icon="hourglass" time="0:10" frame="0">Settling started</event-item>
          <event-item icon="check" time="0:10" frame="1">Settling complete</event-item>
        </info-card>
      </div>`;
  }
}
customElements.define("inspector-pane", InspectorPane);

class AppWindow extends Base {
  render() {
    return `
      <style>
        :host {
          flex: 1;
          display: flex;
          min-width: 0;
          overflow: hidden;
          border: 1px solid #6a6867;
          border-radius: 36px;
          background: #272322;
          box-shadow: 0 0 1px 1px rgba(0, 0, 0, .35), 0 24px 42px rgba(0, 0, 0, .6);
        }
      </style>
      <side-bar></side-bar>
      <log-view></log-view>
      <inspector-pane></inspector-pane>`;
  }
}
customElements.define("app-window", AppWindow);
</script>
</body>
</html>
